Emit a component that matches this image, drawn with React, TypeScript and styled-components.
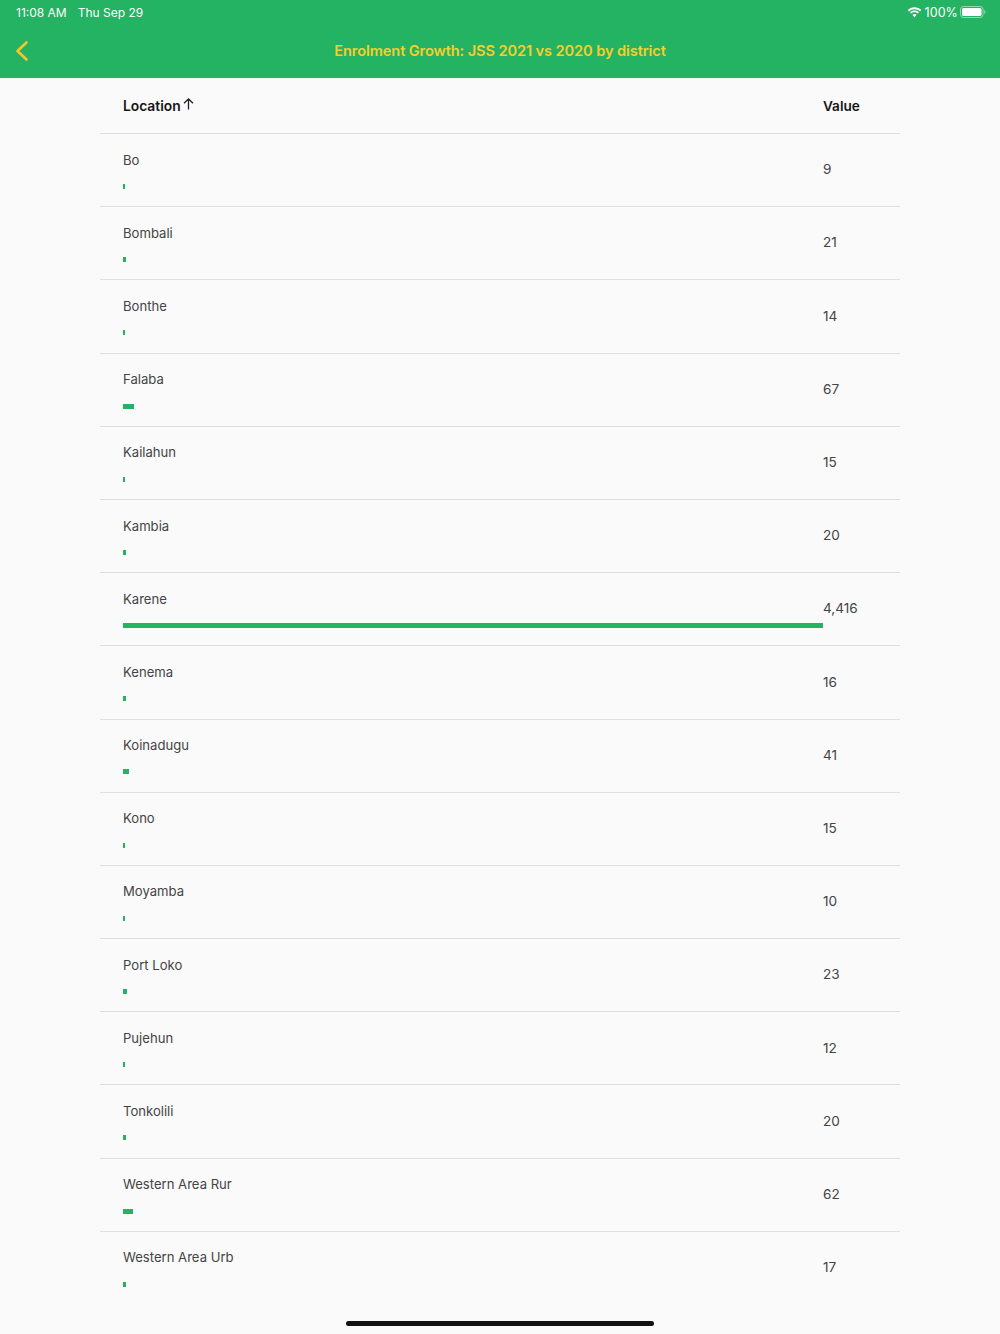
import React from "react";
import styled, { createGlobalStyle } from "styled-components";

const Global = createGlobalStyle`
  html, body { margin: 0; padding: 0; background: #fafafa; }
  body { font-family: "Inter", "Liberation Sans", sans-serif; }
`;

const Page = styled.div`
  position: relative;
  width: 1000px;
  height: 1334px;
  overflow: hidden;
  background: #fafafa;
`;

const Header = styled.header`
  height: 78px;
  background: #24b263;
  display: flex;
  flex-direction: column;
`;

const StatusBar = styled.div`
  height: 24px;
  padding: 0 14px 0 16px;
  display: flex;
  align-items: center;
  justify-content: space-between;
  color: #fff;
  font-size: 12px;
`;

const StatusGroup = styled.div<{ $gap: number }>`
  display: flex;
  align-items: center;
  gap: ${(p) => p.$gap}px;
`;

const Percent = styled.span`
  font-size: 12.5px;
  letter-spacing: 0.1px;
`;

const NavBar = styled.div`
  flex: 1;
  padding-bottom: 1px;
  display: flex;
  align-items: center;
  justify-content: center;
  position: relative;
`;

const BackButton = styled.div`
  position: absolute;
  left: 15px;
  top: 16px;
  width: 14px;
  height: 22px;
  display: flex;
`;

const Title = styled.h1`
  margin: 0;
  color: #f5cf2a;
  font-size: 14.6px;
  font-weight: 600;
  letter-spacing: -0.1px;
`;

const Table = styled.div`
  width: 800px;
  margin: 0 auto;
`;

const Columns = styled.div`
  display: grid;
  grid-template-columns: 723px 77px;
  box-sizing: border-box;
  border-bottom: 1px solid #dfdfdf;
`;

const HeadRow = styled(Columns)`
  height: 56px;
  align-items: center;
  color: #161616;
  font-size: 13.8px;
  font-weight: 600;
`;

const HeadCell = styled.div`
  padding-left: 23px;
  display: flex;
  align-items: center;
  gap: 2px;
`;

const SortIcon = styled.svg`
  margin-top: -3px;
`;

const ValueHead = styled.div`
  font-size: 13.6px;
`;

const Row = styled(Columns)<{ $last: boolean }>`
  height: 73.2px;
  border-bottom-color: ${(p) => (p.$last ? "transparent" : "#dfdfdf")};
`;

const LocationCell = styled.div`
  padding: 16.6px 0 0 23px;
  display: flex;
  flex-direction: column;
`;

const Label = styled.div`
  color: #444;
  font-size: 13.1px;
  line-height: 18px;
`;

const BarTrack = styled.div`
  margin-top: 15.4px;
  height: 5px;
`;

const Bar = styled.div`
  height: 100%;
  min-width: 2px;
  background: #24b263;
`;

const Value = styled.div`
  color: #444;
  font-size: 13.6px;
  padding-bottom: 1.6px;
  display: flex;
  align-items: center;
`;

const HomeIndicator = styled.div`
  position: absolute;
  left: 346px;
  bottom: 8px;
  width: 308px;
  height: 5px;
  border-radius: 3px;
  background: #111;
`;

const data: [string, number][] = [
  ["Bo", 9],
  ["Bombali", 21],
  ["Bonthe", 14],
  ["Falaba", 67],
  ["Kailahun", 15],
  ["Kambia", 20],
  ["Karene", 4416],
  ["Kenema", 16],
  ["Koinadugu", 41],
  ["Kono", 15],
  ["Moyamba", 10],
  ["Port Loko", 23],
  ["Pujehun", 12],
  ["Tonkolili", 20],
  ["Western Area Rur", 62],
  ["Western Area Urb", 17],
];

export default function App() {
  return (
    <Page>
      <Global />
      <Header>
        <StatusBar>
          <StatusGroup $gap={11}>
            <span>11:08 AM</span>
            <span>Thu Sep 29</span>
          </StatusGroup>
          <StatusGroup $gap={2}>
            <svg width="15" height="11" viewBox="0 0 15 11" fill="#fff">
              <path d="M7.500 2.200c2.100 0 4 .8 5.500 2.200l1.200-1.300C12.400 1.200 10.100.3 7.500.3S2.600 1.200.8 3.100L2 4.400c1.500-1.400 3.400-2.200 5.500-2.200z" />
              <path d="M7.500 5.200c1.300 0 2.400.5 3.300 1.300l1.200-1.300C10.800 4 9.200 3.400 7.500 3.400S4.200 4 3 5.200l1.200 1.300c.9-.8 2-1.300 3.300-1.300z" />
              <path d="M7.500 6.900c-.8 0-1.500.3-2.100.8l2.100 2.700 2.100-2.700c-.6-.5-1.300-.8-2.100-.8z" />
            </svg>
            <Percent>100%</Percent>
            <svg width="26" height="12" viewBox="0 0 26 12">
              <rect x="0.500" y="0.500" width="22.500" height="11" rx="3" fill="none" stroke="#fff" strokeOpacity="0.5" />
              <rect x="2" y="2" width="19.500" height="8" rx="1.500" fill="#fff" />
              <path d="M24.200 4v4c.8-.3 1.200-1.100 1.200-2s-.4-1.700-1.200-2z" fill="#fff" fillOpacity="0.5" />
            </svg>
          </StatusGroup>
        </StatusBar>
        <NavBar>
          <BackButton>
            <svg width="14" height="22" viewBox="0 0 14 22" fill="none">
              <path d="M11.500 2.500L2.500 11l9 8.500" stroke="#f5c52a" strokeWidth="2.600" strokeLinecap="round" strokeLinejoin="round" />
            </svg>
          </BackButton>
          <Title>Enrolment Growth: JSS 2021 vs 2020 by district</Title>
        </NavBar>
      </Header>
      <Table>
        <HeadRow>
          <HeadCell>
            Location
            <SortIcon width="11" height="12" viewBox="0 0 11 12" fill="none">
              <path d="M5.500 11.500V1M1 5.200L5.500 1 10 5.200" stroke="#222" strokeWidth="1.300" />
            </SortIcon>
          </HeadCell>
          <ValueHead>Value</ValueHead>
        </HeadRow>
        {data.map(([name, value], i) => (
          <Row key={name} $last={i === data.length - 1}>
            <LocationCell>
              <Label>{name}</Label>
              <BarTrack>
                <Bar style={{ width: `${(value / 4416) * 700}px` }} />
              </BarTrack>
            </LocationCell>
            <Value>{value.toLocaleString("en-US")}</Value>
          </Row>
        ))}
      </Table>
      <HomeIndicator />
    </Page>
  );
}
